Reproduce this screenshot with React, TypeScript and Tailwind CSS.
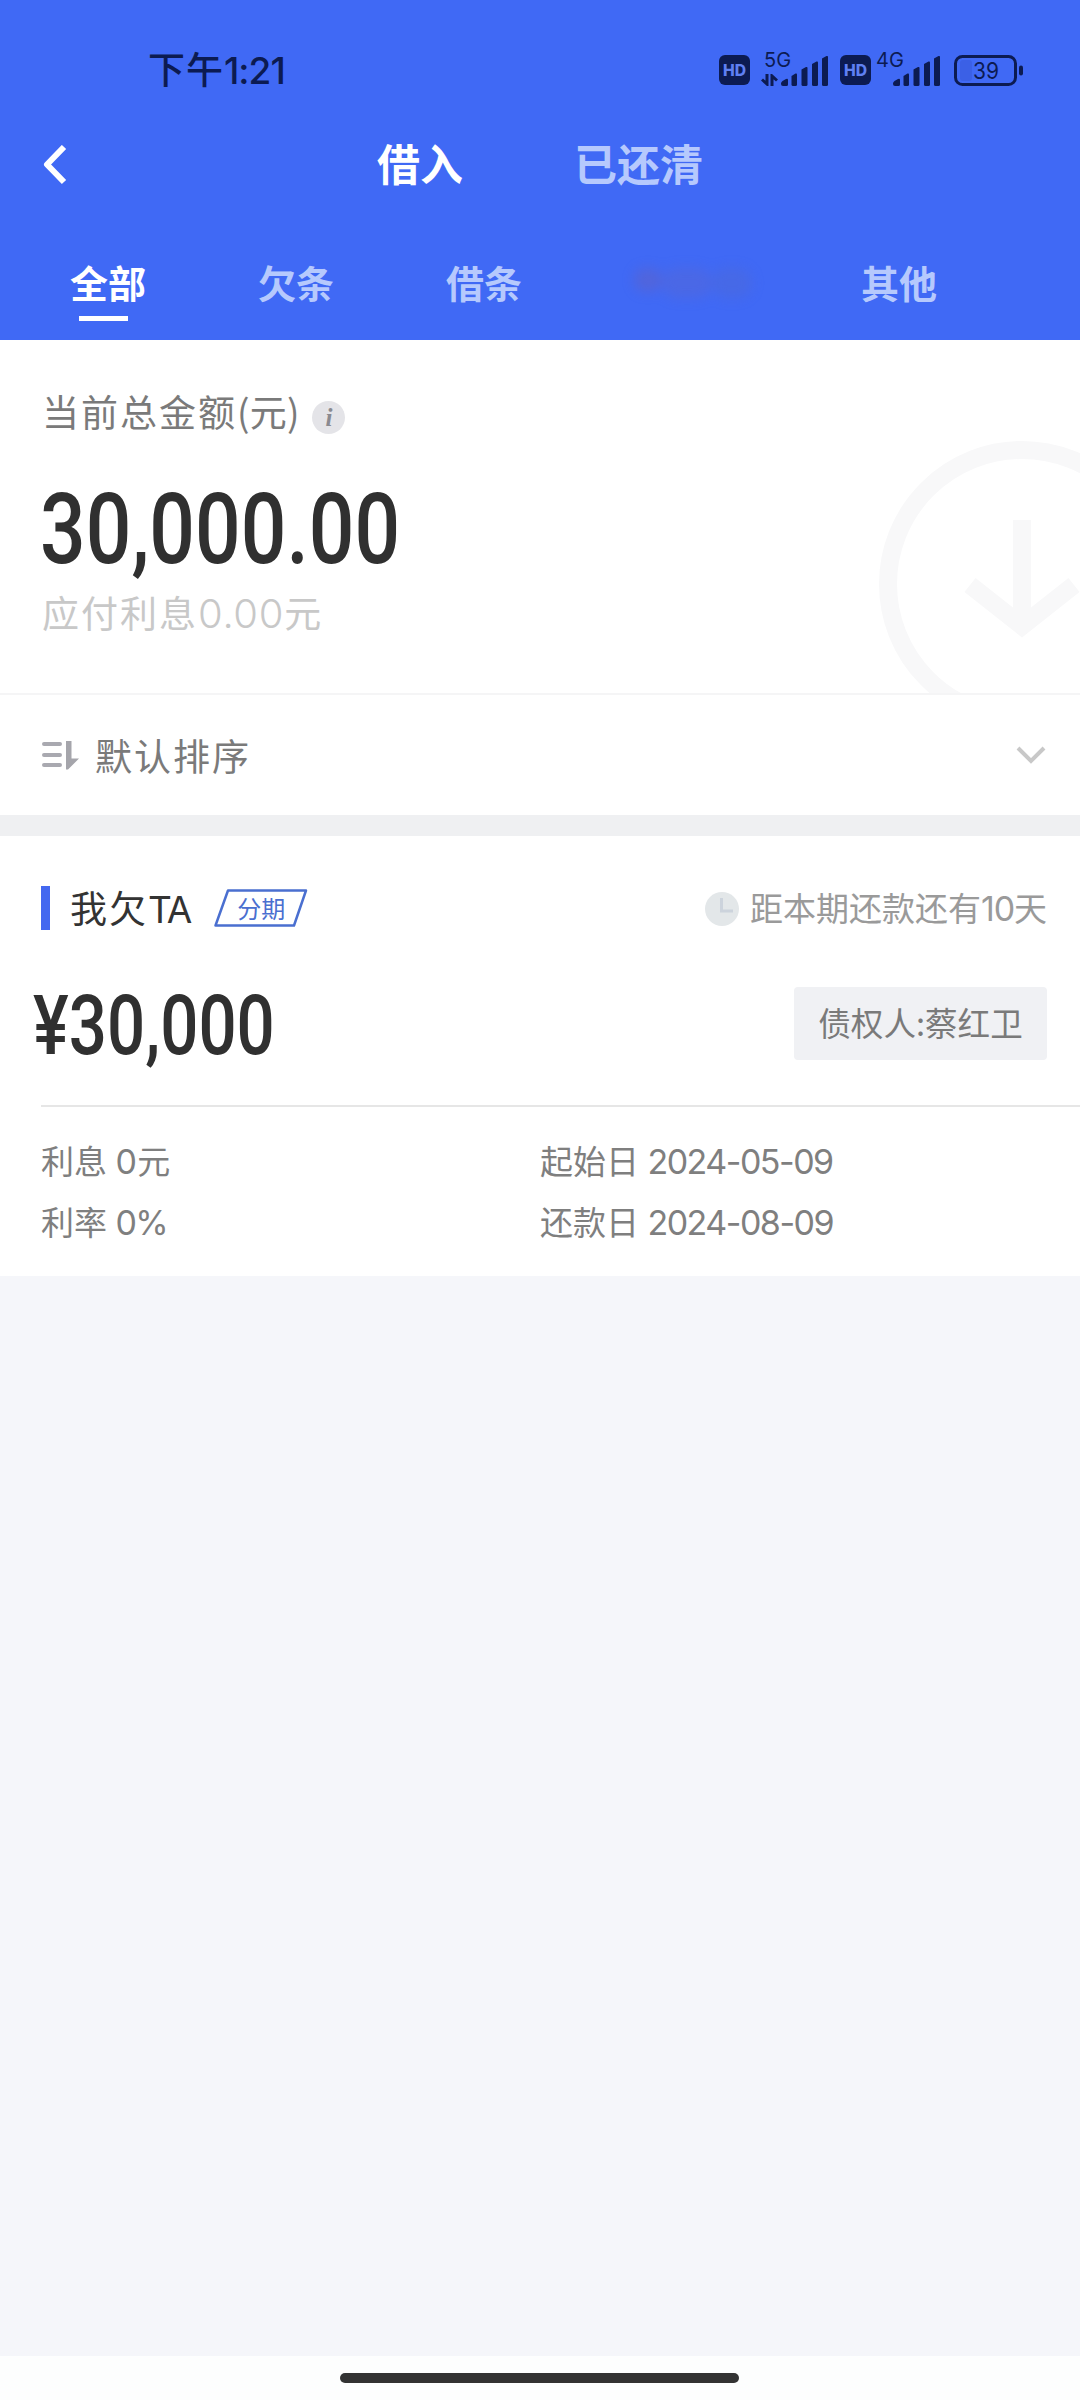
import type { ReactNode } from "react";

const tabs = [
  { label: "全部", active: true },
  { label: "欠条" },
  { label: "借条" },
  { label: "", hidden: true },
  { label: "其他" },
];

const details = [
  { label: "利息", value: "0", unit: "元" },
  { label: "起始日", value: "2024-05-09" },
  { label: "利率", value: "0%" },
  { label: "还款日", value: "2024-08-09" },
];

// Latin digits inside Chinese text
function Num({ children, className = "" }: { children: ReactNode; className?: string }) {
  return <span className={`font-['Inter','Noto_Sans_CJK_SC',sans-serif] ${className}`}>{children}</span>;
}

function HdBadge() {
  return (
    <svg width="31" height="30" viewBox="0 0 31 30" className="shrink-0">
      <rect width="31" height="30" rx="6" fill="#0c1b52" />
      <text x="15.5" y="20.5" textAnchor="middle" textLength="23" lengthAdjust="spacingAndGlyphs" fontFamily="Inter, sans-serif" fontSize="16" fontWeight="800" fill="#5f80f2">
        HD
      </text>
    </svg>
  );
}

function SignalBars() {
  return (
    <svg width="48" height="32" viewBox="0 0 48 32" className="shrink-0" fill="#0c1b52">
      <path d="M0 28.5 Q0 27 1.5 26 L5 24 Q7 23 7 25 V29.5 Q7 31 5.5 31 H2 Q0 31 0 29Z" />
      <path d="M10.5 21 L14.5 18.5 Q16 18 16 19.5 V29.5 Q16 31 14.5 31 H12 Q10.5 31 10.5 29.5Z" />
      <path d="M20.5 14.5 L25 12 Q26.5 11.5 26.5 13 V29.5 Q26.5 31 25 31 H22 Q20.5 31 20.5 29.5Z" />
      <path d="M31 9 L35.5 6.5 Q37 6 37 7.5 V29.5 Q37 31 35.5 31 H32.5 Q31 31 31 29.5Z" />
      <path d="M41 3.5 L45.5 1 Q47 .5 47 2 V29.5 Q47 31 45.5 31 H42.5 Q41 31 41 29.5Z" />
    </svg>
  );
}

function Battery() {
  return (
    <svg width="70" height="31" viewBox="0 0 70 31" className="shrink-0">
      <rect x="6" y="5" width="12" height="21" rx="3" fill="#3b60e6" />
      <rect x="1.5" y="1.5" width="60" height="28" rx="7" fill="none" stroke="#0c1b52" strokeWidth="3" />
      <rect x="65" y="10.5" width="4" height="10" rx="2" fill="#0c1b52" />
      <text x="32" y="24" textAnchor="middle" fontFamily="Inter, sans-serif" fontSize="23" textLength="26" lengthAdjust="spacingAndGlyphs" fill="#0c1b52">
        39
      </text>
    </svg>
  );
}

function StatusBar() {
  return (
    <div className="flex h-[110px] items-start pl-[148px]">
      <div className="mt-[42px] flex-1 text-[37px] leading-[52px] font-medium tracking-[1px] text-[#0c1b52]">
        下午<Num className="tracking-[-1px]">1:21</Num>
      </div>
      <div className="mt-[55px] flex pr-[56px]">
        <HdBadge />
        <div className="relative ml-[31px]">
          <span className="absolute -top-[8px] -left-[17px] text-[20px] leading-[24px] text-[#0c1b52]">
            <Num>5G</Num>
          </span>
          <svg width="17" height="12" viewBox="0 0 17 12" className="absolute top-[19px] -left-[20px]" fill="none" stroke="#0c1b52" strokeWidth="3">
            <path d="M6 0 V10 L1 5.5 M11 12 V2 L16 6.5" />
          </svg>
          <SignalBars />
        </div>
        <div className="ml-[11px]">
          <HdBadge />
        </div>
        <div className="relative ml-[22px]">
          <span className="absolute -top-[8px] -left-[17px] text-[20px] leading-[24px] text-[#0c1b52]">
            <Num>4G</Num>
          </span>
          <SignalBars />
        </div>
        <div className="ml-[13px]">
          <Battery />
        </div>
      </div>
    </div>
  );
}

function Header() {
  return (
    <header className="flex h-[340px] flex-col bg-[#4069f5]">
      <StatusBar />
      <nav className="flex h-[110px] items-center pl-[43px]">
        <svg width="24" height="40" viewBox="0 0 24 40" className="shrink-0" fill="none" stroke="#fff" strokeWidth="6">
          <path d="M21 2 L4 19.5 L21 37" strokeLinejoin="round" />
        </svg>
        <span className="mb-[6px] ml-[310px] text-[43px] leading-[60px] font-bold text-white">借入</span>
        <span className="mb-[6px] ml-[111px] text-[43px] leading-[60px] font-bold text-[#b6c9fd]">已还清</span>
      </nav>
      <div className="flex h-[120px] pl-[70px]">
        {tabs.map((tab, i) =>
          tab.hidden ? (
            <div key={i} className="mt-[48px] mr-[109px] flex h-[32px] w-[118px] blur-[6px]">
              <div className="h-[24px] w-[28px] rounded-full bg-[#6a60b8]/40" />
              <div className="h-[30px] w-[50px] rounded-full bg-[#5a66cf]/40" />
              <div className="h-[30px] w-[40px] rounded-full bg-[#4f6ad2]/40" />
            </div>
          ) : (
            <div key={i} className="mt-[35px] mr-[112px] w-[76px]">
              <div className={tab.active ? "text-[38px] leading-[54px] font-bold text-white" : "text-[38px] leading-[54px] font-bold text-[#b6c9fd]"}>
                {tab.label}
              </div>
              {tab.active && <div className="mt-[7px] ml-[9px] h-[5px] w-[49px] bg-white" />}
            </div>
          ),
        )}
      </div>
    </header>
  );
}

function Summary() {
  return (
    <section className="relative h-[355px] overflow-hidden border-b-2 border-[#f5f5f6] pl-[42px]">
      <svg width="202" height="253" viewBox="0 0 202 253" className="absolute right-0 bottom-0" fill="none" stroke="#f8f8f9" strokeWidth="18">
        <circle cx="144" cy="144" r="134" />
        <path d="M144 80 V186" />
        <path d="M92 145 L144 186 L196 145" />
      </svg>
      <div className="flex items-center pt-[45px]">
        <span className="text-[37px] leading-[52px] tracking-[2px] text-[#7a7a7a]">
          当前总金额<span className="tracking-[0.3px]">(元)</span>
        </span>
        <svg width="33" height="33" viewBox="0 0 33 33" className="mt-[12px] ml-[12px]">
          <circle cx="16.5" cy="16.5" r="16.5" fill="#e4e4e8" />
          <text x="17" y="25" textAnchor="middle" fontFamily="Liberation Serif, serif" fontSize="25" fontWeight="700" fontStyle="italic" fill="#8a8a90">
            i
          </text>
        </svg>
      </div>
      <div className="mt-[34px] -ml-[2px] h-[116px] origin-left scale-x-[0.812] font-['Roboto',sans-serif] text-[99px] leading-[116px] font-medium whitespace-nowrap text-[#303030]">
        30,000.00
      </div>
      <div className="-mt-[1px] text-[37px] leading-[52px] tracking-[2px] text-[#c8c8c8]">
        应付利息<Num className="text-[40px] font-light tracking-[0.7px]">0.00</Num>元
      </div>
    </section>
  );
}

function SortRow() {
  return (
    <div className="flex h-[120px] items-center pr-[34px] pl-[42px]">
      <svg width="38" height="30" viewBox="0 0 38 30" className="shrink-0">
        <path d="M2 4 H18 M2 15 H18 M2 25 H18" stroke="#a9a9b0" strokeWidth="4" strokeLinecap="round" />
        <path d="M24 1 H29.5 V18.5 H37 L26 29.5 H24Z" fill="#a5a5ab" />
      </svg>
      <span className="ml-[15px] flex-1 text-[37px] leading-[52px] tracking-[2px] text-[#7a7a7a]">默认排序</span>
      <svg width="30" height="18" viewBox="0 0 30 18" fill="none" stroke="#c8c8c8" strokeWidth="4">
        <path d="M2 2 L15 15 L28 2" />
      </svg>
    </div>
  );
}

function LoanCard() {
  return (
    <article className="h-[440px] bg-white pt-[46px]">
      <div className="flex h-[52px] items-center pr-[33px] pl-[41px]">
        <div className="h-[44px] w-[9px] bg-[#4468f0]" />
        <span className="ml-[20px] text-[37px] leading-[52px] tracking-[2px] text-[#333]">
          我欠<Num className="tracking-[-2px]">TA</Num>
        </span>
        <div className="relative ml-[24px] flex h-[38px] w-[94px] items-center justify-center">
          <svg width="94" height="38" viewBox="0 0 94 38" className="absolute inset-0" fill="none" stroke="#4a6fd0" strokeWidth="2.5" strokeLinejoin="round">
            <path d="M14 1.5 H92 L80 36.5 H1.5Z" />
          </svg>
          <span className="text-[24px] leading-[36px] text-[#4a6fd0]">分期</span>
        </div>
        <svg width="34" height="34" viewBox="0 0 34 34" className="mt-[2px] ml-auto">
          <circle cx="17" cy="17" r="17" fill="#e3e7e9" />
          <path d="M16.5 6 V19 H28" fill="none" stroke="#ccd3dc" strokeWidth="3" />
        </svg>
        <span className="ml-[11px] text-[33px] leading-[48px] text-[#9a9a9a]">
          距本期还款还有<Num className="text-[34px] tracking-[-1.2px]">10</Num>天
        </span>
      </div>

      <div className="mt-[34px] flex h-[110px] items-center justify-between pr-[33px] pl-[33px]">
        <div className="mt-[6px] w-[300px] origin-left scale-x-[0.81] font-['Roboto',sans-serif] text-[83px] leading-[100px] font-medium whitespace-nowrap text-[#303030]">
          ¥30,000
        </div>
        <div className="flex h-[73px] w-[253px] items-center justify-center rounded-[4px] bg-[#f0f1f4] pb-[3px] text-[32.6px] leading-[48px] text-[#7a7a7a]">
          债权人:蔡红卫
        </div>
      </div>

      <div className="mt-[27px] ml-[41px] grid grid-cols-[499px_1fr] border-t-2 border-[#e6e6e6] pt-[23px] text-[33px] leading-[61px] text-[#7f7f7f]">
        {details.map((item) => (
          <div key={item.label} className="h-[61px] whitespace-pre">
            {item.label} <Num className="ml-[1px] text-[34px] tracking-[-1.5px]">{item.value}</Num>
            {item.unit && <span className="ml-[2px]">{item.unit}</span>}
          </div>
        ))}
      </div>
    </article>
  );
}

export default function App() {
  return (
    <div className="flex h-[2400px] w-[1080px] flex-col overflow-hidden bg-[#f5f6fa] font-['Noto_Sans_CJK_SC',sans-serif]">
      <Header />
      <main className="flex flex-1 flex-col">
        <div className="bg-white">
          <Summary />
          <SortRow />
        </div>
        <div className="h-[21px] bg-[#eff0f2]" />
        <LoanCard />
      </main>
      {/* Gesture bar */}
      <footer className="flex h-[44px] justify-center bg-[#fdfefe] pt-[17px] pr-[1px]">
        <div className="h-[10px] w-[399px] rounded-full bg-[#333]" />
      </footer>
    </div>
  );
}
